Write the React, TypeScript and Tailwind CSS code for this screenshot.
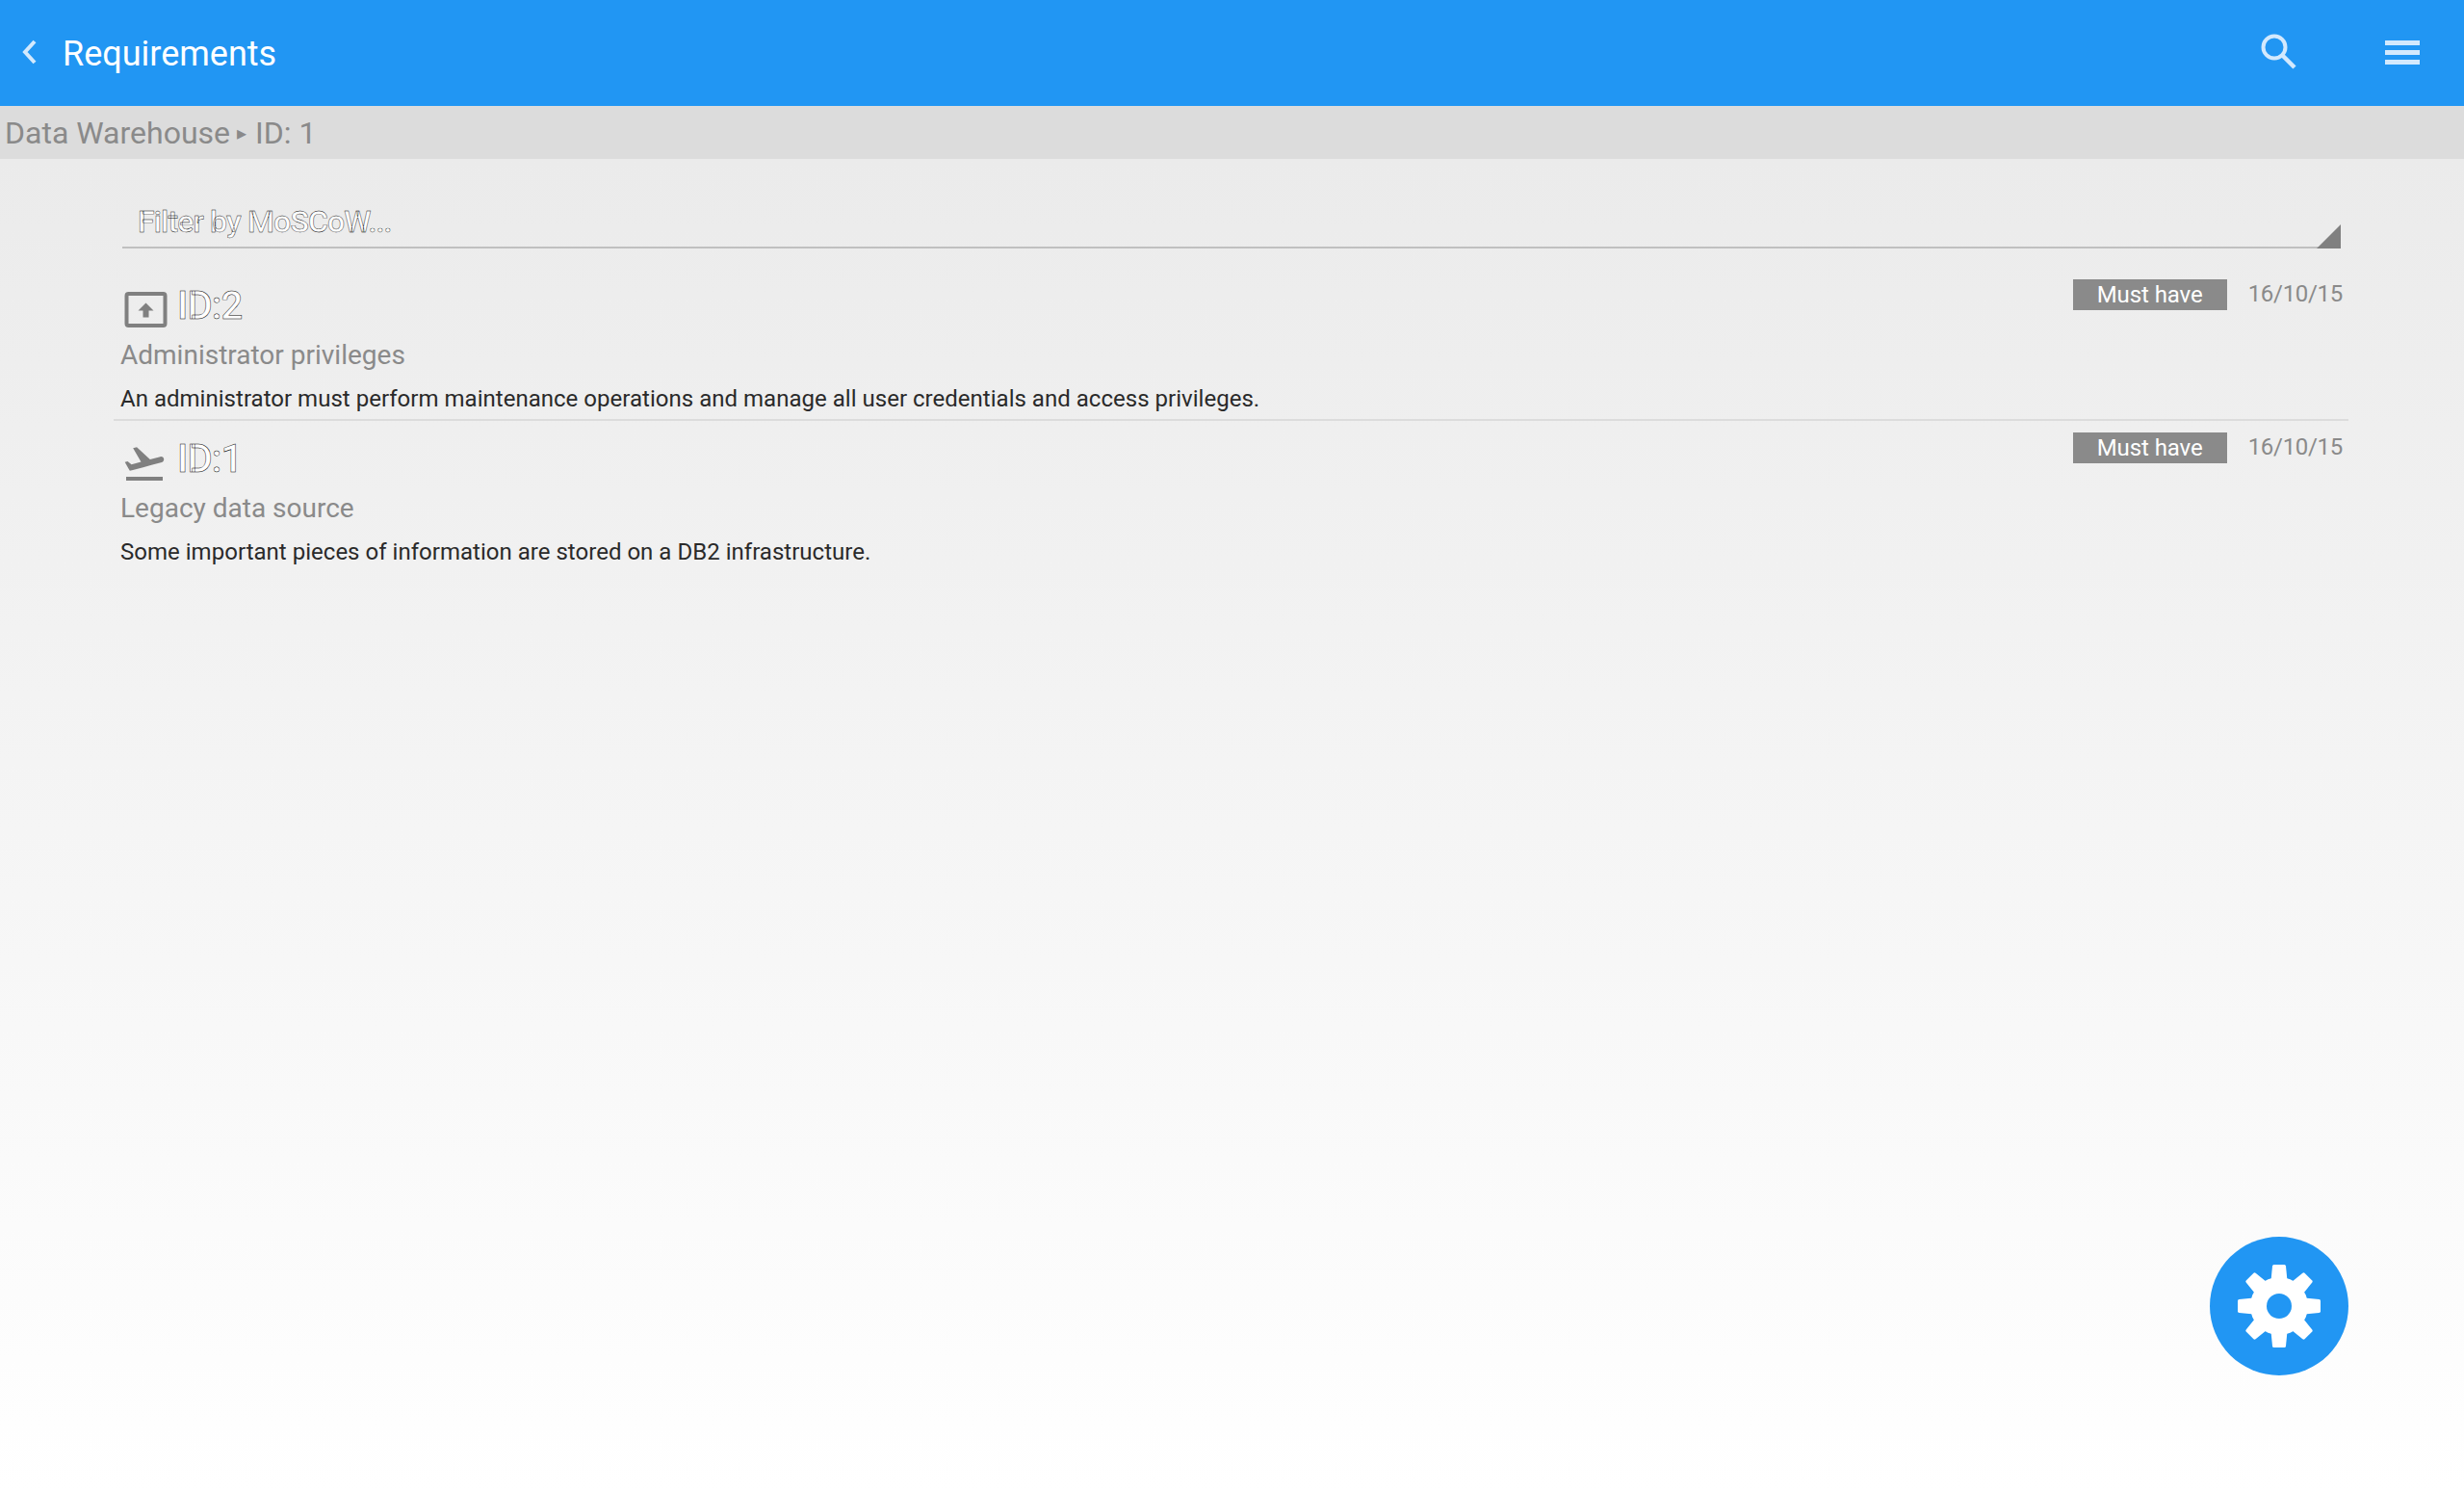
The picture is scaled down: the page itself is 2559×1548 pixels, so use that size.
const gearTeeth = [0, 45, 90, 135, 180, 225, 270, 315]

function Gear() {
  return (
    <svg width="144" height="144" viewBox="0 0 144 144">
      <circle cx="72" cy="72" r="30" fill="#fff" />
      {gearTeeth.map((a) => (
        <path
          key={a}
          d="M63.5 46 L65 30.5 Q65.2 29 66.5 29 L77.5 29 Q78.8 29 79 30.5 L80.5 46 Z"
          fill="#fff"
          transform={`rotate(${a} 72 72)`}
        />
      ))}
      <circle cx="72" cy="72" r="13" fill="#2196f3" />
    </svg>
  )
}

function Badge() {
  return (
    <div className="flex items-center self-start mt-[11px] shrink-0">
      <span className="w-[160px] h-[32px] flex items-center justify-center bg-[#8a8a8a] text-white text-[24px] tracking-[-0.1px]">
        Must have
      </span>
      <span className="ml-[22px] text-[24px] leading-[33px] tracking-[-0.3px] text-[#8a8a8a]">16/10/15</span>
    </div>
  )
}

function RequirementRow({ id, icon, title, text, divider }: { id: string; icon: React.ReactNode; title: string; text: string; divider?: boolean }) {
  return (
    <div className={`flex justify-between h-[159px] pl-[7px] pr-[6px] ${divider ? 'border-b-2 border-[#dcdcdc]' : ''}`}>
      <div>
        <div className="flex items-start h-[68px]">
          <div className="w-[58px] h-[68px] flex items-start">{icon}</div>
          <span className="mt-[16px] ml-[1px] text-[40px] leading-[47px] font-medium tracking-[-0.8px] text-white [-webkit-text-stroke:0.45px_#000]">ID:{id}</span>
        </div>
        <div className="text-[28px] leading-[36px] text-[#8a8a8a] mt-[5px]">{title}</div>
        <div className="text-[24px] leading-[32px] tracking-[0.02px] text-[#2a2a2a] mt-[11px]">{text}</div>
      </div>
      <Badge />
    </div>
  )
}

export default function App() {
  return (
    <div className="relative w-full h-[1548px] flex flex-col overflow-hidden font-['Roboto',sans-serif]">
      <header className="h-[110px] shrink-0 bg-[#2196f3] flex items-center">
        <svg width="16" height="26" viewBox="0 0 16 26" className="ml-[22px] mb-[2px]">
          <path d="M14 2 L4 13 L14 24" fill="none" stroke="#d3e9fd" strokeWidth="4" />
        </svg>
        <span className="ml-[27px] mt-[2px] text-[36px] text-white">Requirements</span>
        <div className="ml-auto flex items-center">
          <svg width="38" height="38" viewBox="0 0 38 38" className="mb-[4px]">
            <circle cx="15" cy="15" r="11.5" fill="none" stroke="#d3e9fd" strokeWidth="4" />
            <path d="M23.5 23.5 L36 36" stroke="#d3e9fd" strokeWidth="4.5" />
          </svg>
          <div className="ml-[92px] mr-[46px] mb-[2px] w-[36px] flex flex-col gap-[5px]">
            <div className="h-[5px] bg-[#d3e9fd]" />
            <div className="h-[5px] bg-[#d3e9fd]" />
            <div className="h-[5px] bg-[#d3e9fd]" />
          </div>
        </div>
      </header>
      <div className="h-[55px] shrink-0 bg-[#dcdcdc] flex items-center pl-[5px] text-[32px] text-[#8a8a8a]">
        <span>Data Warehouse</span>
        <span className="ml-[7px] mr-[9px] text-[20px]">▸</span>
        <span>ID: 1</span>
      </div>
      <main className="flex-1 bg-gradient-to-b from-[#ebebeb] to-white pl-[118px] pr-[120px]">
        <div className="relative ml-[9px] mr-[8px] mt-[44px] mb-[20px] h-[49px] border-b-2 border-[#c0c0c0] pl-[16px]">
          <span className="text-[32px] leading-[42px] block font-medium tracking-[-0.85px] text-white [-webkit-text-stroke:0.4px_#000]">Filter by MoSCoW...</span>
          <svg width="25" height="25" viewBox="0 0 25 25" className="absolute right-0 bottom-[-2px]">
            <path d="M25 0 V25 H0 Z" fill="#808080" />
          </svg>
        </div>
        <RequirementRow
          divider
          id="2"
          title="Administrator privileges"
          text="An administrator must perform maintenance operations and manage all user credentials and access privileges."
          icon={
            <svg width="48" height="48" viewBox="0 0 48 48" className="mt-[19px] ml-[1px]">
              <rect x="5.5" y="8" width="40" height="33" rx="2" fill="none" stroke="#808080" strokeWidth="4" />
              <path d="M25.5 17.5 L33.5 25.5 H28.5 V32.5 H22.5 V25.5 H17.5 Z" fill="#808080" />
            </svg>
          }
        />
        <RequirementRow
          id="1"
          title="Legacy data source"
          text="Some important pieces of information are stored on a DB2 infrastructure."
          icon={
            <svg width="48" height="48" viewBox="0 0 24 24" className="mt-[20px] ml-[1px]">
              <path
                d="M2.5 19h19v2h-19zm19.57-9.36c-.21-.8-1.04-1.28-1.84-1.06L14.92 10l-6.9-6.43-1.93.51 4.14 7.17-4.97 1.33-1.97-1.54-1.45.39 1.82 3.16.77 1.33 1.6-.43 5.31-1.42 4.35-1.16L21 11.49c.81-.23 1.28-1.05 1.07-1.85z"
                fill="#808080"
              />
            </svg>
          }
        />
      </main>
      <button className="absolute left-[2295px] top-[1284px] w-[144px] h-[144px] rounded-full bg-[#2196f3] flex items-center justify-center">
        <Gear />
      </button>
    </div>
  )
}
